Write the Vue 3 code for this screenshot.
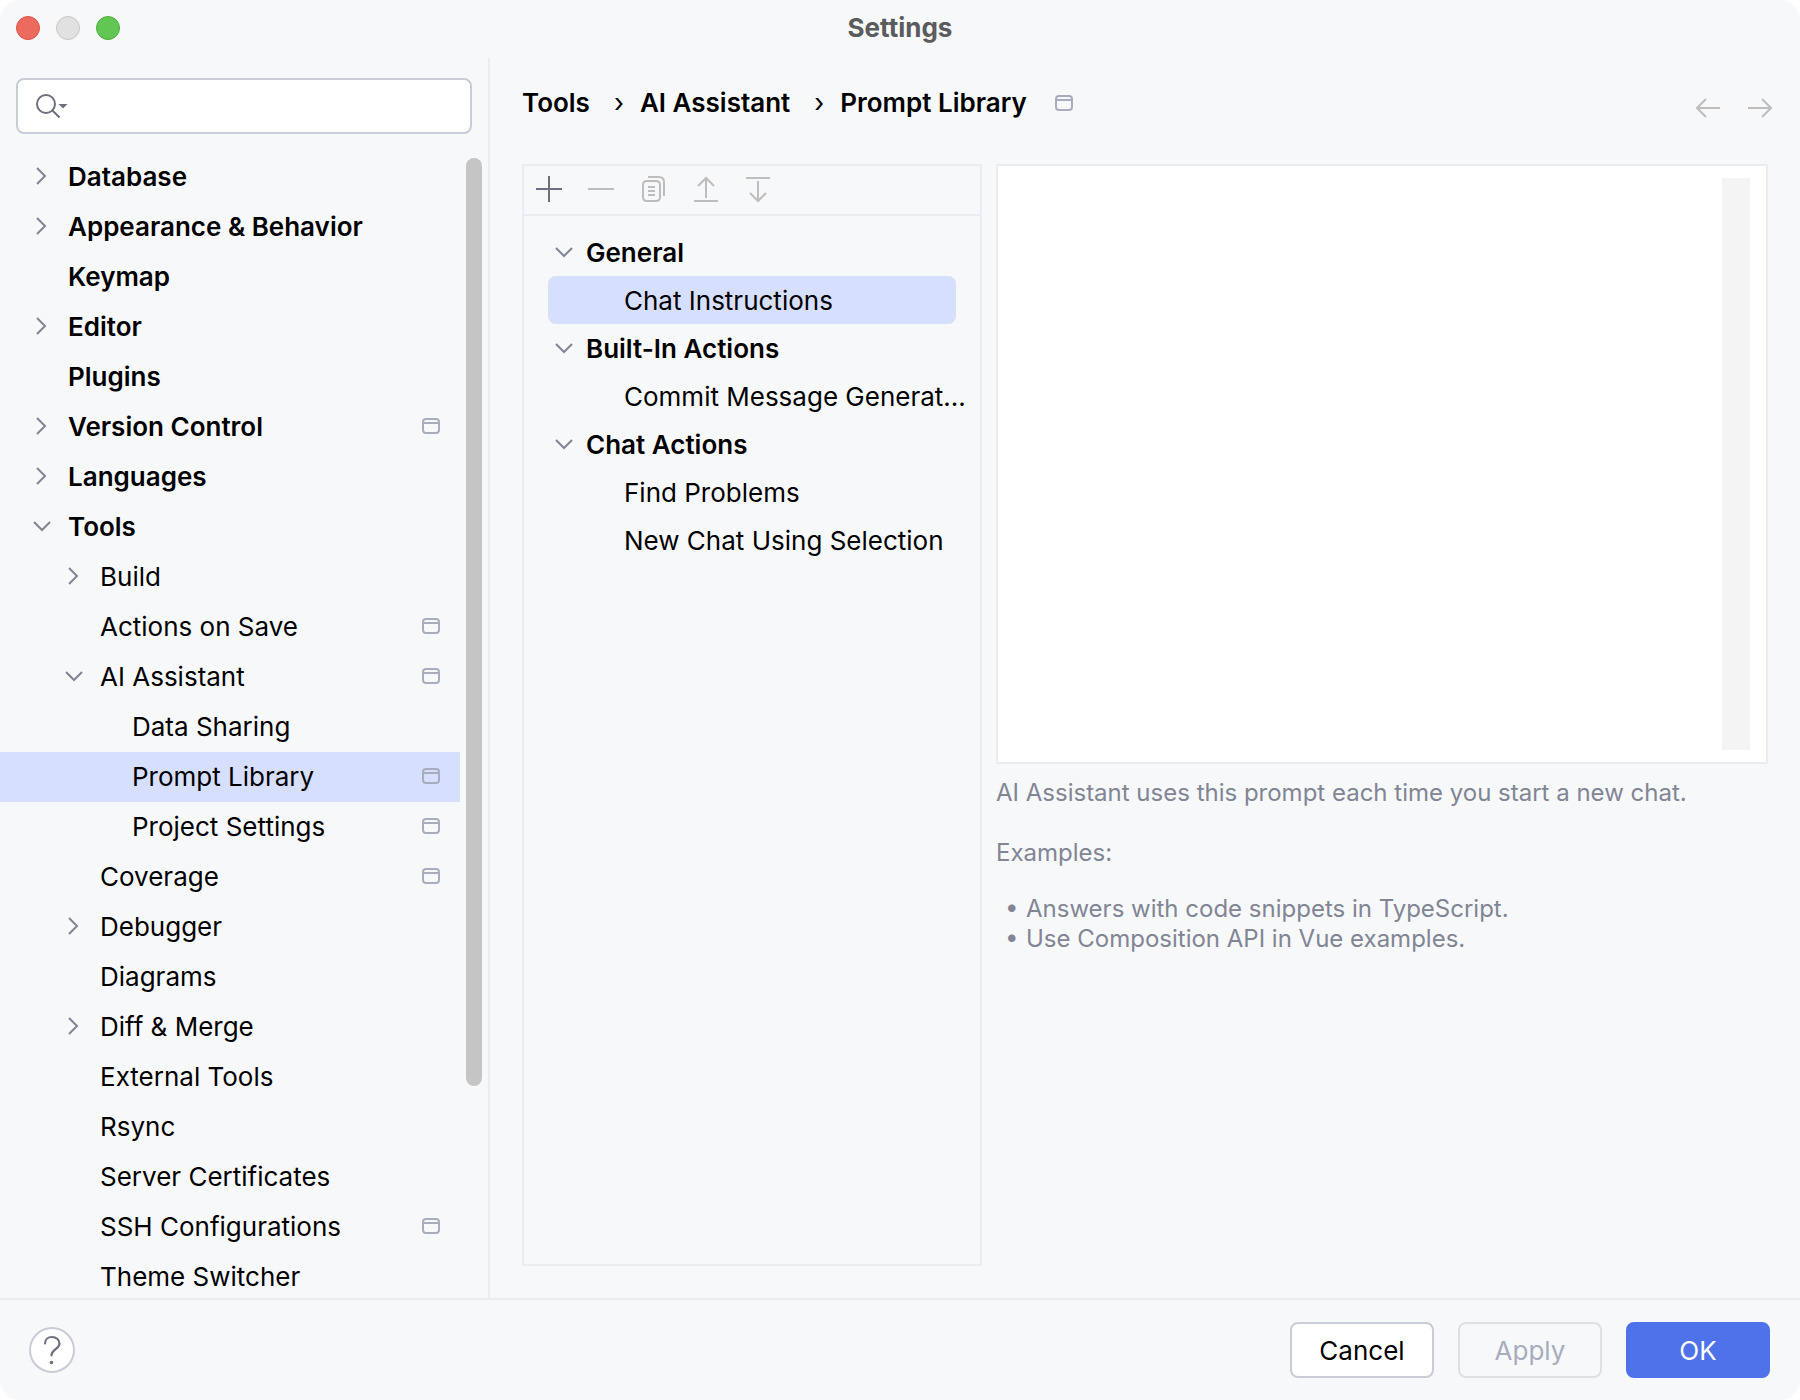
<template>
    <div class="window">
        <header class="titlebar">
            <div class="lights">
                <button type="button" class="light red" aria-label="Close"></button>
                <button type="button" class="light grey" aria-label="Minimize" disabled></button>
                <button type="button" class="light green" aria-label="Zoom"></button>
            </div>
            <h1>Settings</h1>
        </header>

        <div class="body">
            <aside class="sidebar">
                <label class="search">
                    <svg width="36" height="28" viewBox="0 0 36 28" fill="none" aria-hidden="true">
                        <circle cx="12" cy="12" r="9" stroke="#6c707e" stroke-width="2" />
                        <path d="M18.5 18.5L25.5 25.5" stroke="#6c707e" stroke-width="2" />
                        <path d="M24.5 12H33.5L29 16.5Z" fill="#6c707e" />
                    </svg>
                    <input v-model="query" type="text" aria-label="Search settings" />
                </label>

                <div class="scroll_area">
                    <nav class="tree">
                        <a
                            v-for="item in pages"
                            :key="item.name"
                            href="#"
                            class="tree_row"
                            :class="['level' + item.level, { selected: item.name === page }]"
                            @click.prevent="page = item.name"
                        >
                            <svg class="arrow" width="32" height="32" viewBox="0 0 32 32" aria-hidden="true">
                                <path v-if="item.arrow" :d="arrows[item.arrow]" />
                            </svg>
                            <span class="tree_name">{{ item.name }}</span>
                            <svg v-if="item.project" class="badge" width="18" height="18" viewBox="0 0 18 18" aria-hidden="true">
                                <rect x="1" y="1" width="16" height="14" rx="3" />
                                <path d="M1 5H17" />
                            </svg>
                        </a>
                    </nav>
                    <div class="scrollbar"></div>
                </div>
            </aside>

            <main class="content">
                <div class="top">
                    <nav class="crumbs">
                        <a href="#">Tools</a>
                        <span class="sep">›</span>
                        <a href="#">AI Assistant</a>
                        <span class="sep">›</span>
                        <a href="#">Prompt Library</a>
                        <svg class="badge" width="18" height="16" viewBox="0 0 18 16" aria-hidden="true">
                            <rect x="1" y="1" width="16" height="14" rx="3" />
                            <path d="M1 5H17" />
                        </svg>
                    </nav>
                    <div class="history">
                        <button type="button" aria-label="Back" disabled>
                            <svg width="24" height="20" viewBox="0 0 24 20"><path d="M24 10H1M10 1L1 10L10 19" /></svg>
                        </button>
                        <button type="button" aria-label="Forward" disabled>
                            <svg width="24" height="20" viewBox="0 0 24 20"><path d="M0 10H23M14 1L23 10L14 19" /></svg>
                        </button>
                    </div>
                </div>

                <div class="columns">
                    <section class="prompts">
                        <div class="toolbar">
                            <button v-for="tool in tools" :key="tool.label" type="button" :aria-label="tool.label" :disabled="!tool.enabled">
                                <svg width="28" height="28" viewBox="0 0 28 28"><path :d="tool.path" /></svg>
                            </button>
                        </div>
                        <div class="groups">
                            <template v-for="group in groups" :key="group.name">
                                <button type="button" class="prompt_row group">
                                    <svg class="arrow" width="32" height="32" viewBox="0 0 32 32" aria-hidden="true">
                                        <path :d="arrows.down" />
                                    </svg>
                                    {{ group.name }}
                                </button>
                                <button
                                    v-for="name in group.prompts"
                                    :key="name"
                                    type="button"
                                    class="prompt_row prompt"
                                    :class="{ selected: name === prompt }"
                                    @click="prompt = name"
                                >{{ name }}</button>
                            </template>
                        </div>
                    </section>

                    <section class="details">
                        <div class="editor">
                            <textarea v-model="text" aria-label="Prompt text"></textarea>
                            <div class="track"></div>
                        </div>
                        <div class="hint">
                            <p>AI Assistant uses this prompt each time you start a new chat.</p>
                            <p>Examples:</p>
                            <ul>
                                <li>Answers with code snippets in TypeScript.</li>
                                <li>Use Composition API in Vue examples.</li>
                            </ul>
                        </div>
                    </section>
                </div>
            </main>
        </div>

        <footer class="footer">
            <button type="button" class="help" aria-label="Help">
                <svg width="20" height="30" viewBox="0 0 20 30" aria-hidden="true">
                    <path d="M3 8.5C3 4.5 6 2 10 2C14 2 17.5 4.5 17.5 8.5C17.5 14 9.5 14.5 9.5 20.5" fill="none" stroke="#6c707e" stroke-width="2.2" stroke-linecap="round" />
                    <circle cx="9.5" cy="27.5" r="1.8" fill="#6c707e" />
                </svg>
            </button>
            <div class="actions">
                <button type="button" class="btn">Cancel</button>
                <button type="button" class="btn" disabled>Apply</button>
                <button type="button" class="btn primary">OK</button>
            </div>
        </footer>
    </div>
</template>

<script setup>
    import { ref } from "vue";

    const query = ref("");
    const text = ref("");
    const page = ref("Prompt Library");
    const prompt = ref("Chat Instructions");

    const arrows = {
        right: "M11 7L19 15L11 23",
        down: "M8 11L16 19L24 11",
    };

    const pages = [
        { name: "Database", level: 0, arrow: "right" },
        { name: "Appearance & Behavior", level: 0, arrow: "right" },
        { name: "Keymap", level: 0 },
        { name: "Editor", level: 0, arrow: "right" },
        { name: "Plugins", level: 0 },
        { name: "Version Control", level: 0, arrow: "right", project: true },
        { name: "Languages", level: 0, arrow: "right" },
        { name: "Tools", level: 0, arrow: "down" },
        { name: "Build", level: 1, arrow: "right" },
        { name: "Actions on Save", level: 1, project: true },
        { name: "AI Assistant", level: 1, arrow: "down", project: true },
        { name: "Data Sharing", level: 2 },
        { name: "Prompt Library", level: 2, project: true },
        { name: "Project Settings", level: 2, project: true },
        { name: "Coverage", level: 1, project: true },
        { name: "Debugger", level: 1, arrow: "right" },
        { name: "Diagrams", level: 1 },
        { name: "Diff & Merge", level: 1, arrow: "right" },
        { name: "External Tools", level: 1 },
        { name: "Rsync", level: 1 },
        { name: "Server Certificates", level: 1 },
        { name: "SSH Configurations", level: 1, project: true },
        { name: "Theme Switcher", level: 1 },
    ];

    const tools = [
        { label: "Add", enabled: true, path: "M14 1V27M1 14H27" },
        { label: "Remove", path: "M1 14H27" },
        { label: "Copy", path: "M8 6H17Q21 6 21 10V22Q21 26 17 26H8Q4 26 4 22V10Q4 6 8 6ZM9 12H16M9 16H16M9 20H16M9 2H20Q25 2 25 7V21" },
        { label: "Export", path: "M15 23V3M7 11L15 3L23 11M3 26H27" },
        { label: "Import", path: "M3 3H27M15 6V26M7 18L15 26L23 18" },
    ];

    const groups = [
        { name: "General", prompts: ["Chat Instructions"] },
        { name: "Built-In Actions", prompts: ["Commit Message Generat..."] },
        { name: "Chat Actions", prompts: ["Find Problems", "New Chat Using Selection"] },
    ];
</script>

<style>
    body {
        margin: 0;
        background: #fff;
    }
</style>

<style scoped>
    .window {
        display: flex;
        flex-direction: column;
        height: 100vh;
        box-sizing: border-box;
        border-radius: 20px;
        overflow: hidden;
        background: #f7f8fa;
        color: #000;
        font-family: Inter, "Liberation Sans", sans-serif;
        font-size: 26px;
        line-height: 32px;
    }
    button, input, textarea {
        font: inherit;
        color: inherit;
        margin: 0;
        padding: 0;
        border: none;
        background: none;
    }
    a {
        color: inherit;
        text-decoration: none;
    }
    svg {
        flex: none;
        display: block;
    }

    /* title bar */
    .titlebar {
        display: grid;
        grid-template-columns: 1fr auto 1fr;
        align-items: center;
        height: 58px;
        padding: 0 16px 2px;
        box-sizing: border-box;
        flex: none;
    }
    .lights {
        display: flex;
        gap: 16px;
    }
    .light {
        width: 24px;
        height: 24px;
        border-radius: 50%;
        border: 1px solid;
    }
    .red {
        background: #ec6b5e;
        border-color: #d75548;
    }
    .grey {
        background: #e1e1e1;
        border-color: #c6c6c6;
    }
    .green {
        background: #61c654;
        border-color: #4dac3f;
    }
    h1 {
        margin: 0;
        font-size: 26px;
        font-weight: 700;
        color: #5a5b5c;
    }

    .body {
        display: flex;
        flex: 1;
        min-height: 0;
    }

    /* sidebar */
    .sidebar {
        display: flex;
        flex-direction: column;
        flex: none;
        width: 488px;
        border-right: 2px solid #ebecf0;
    }
    .search {
        display: flex;
        align-items: center;
        flex: none;
        gap: 8px;
        height: 56px;
        margin: 20px 16px 0;
        padding: 0 16px;
        box-sizing: border-box;
        border: 2px solid #c9ccd6;
        border-radius: 8px;
        background: #fff;
    }
    .search input {
        flex: 1;
        min-width: 0;
        outline: none;
    }
    .scroll_area {
        display: flex;
        gap: 6px;
        flex: 1;
        min-height: 0;
        padding: 18px 6px 0 0;
        overflow: hidden;
    }
    .tree {
        flex: 1;
        min-width: 0;
    }
    .tree_row {
        display: flex;
        align-items: center;
        height: 50px;
        padding-right: 20px;
    }
    .tree_name {
        flex: 1;
        margin-left: 10px;
    }
    .level0 {
        padding-left: 26px;
        font-weight: 600;
    }
    .level1 {
        padding-left: 58px;
    }
    .level2 {
        padding-left: 90px;
    }
    .selected {
        background: #d6dffd;
    }
    .arrow path {
        fill: none;
        stroke: #818594;
        stroke-width: 2;
    }
    .badge {
        fill: none;
        stroke: #a8adbd;
        stroke-width: 2;
    }
    .scrollbar {
        width: 16px;
        height: 928px;
        margin-top: 6px;
        border-radius: 8px;
        background: #c5c5c6;
    }

    /* page */
    .content {
        display: flex;
        flex-direction: column;
        flex: 1;
        min-width: 0;
        padding: 28px 32px 32px;
    }
    .top {
        display: flex;
        align-items: center;
        justify-content: space-between;
        height: 34px;
    }
    .crumbs {
        display: flex;
        align-items: center;
        font-weight: 600;
    }
    .sep {
        margin: 0 16px 0 24px;
        font-weight: 400;
    }
    .crumbs .badge {
        margin-left: 28px;
    }
    .history {
        display: flex;
        gap: 28px;
        padding: 10px 0 0;
        margin-right: -4px;
    }
    .history path, .toolbar path {
        fill: none;
        stroke: #6c707e;
        stroke-width: 2;
    }
    .history button:disabled path, .toolbar button:disabled path {
        stroke: #bdbdbd;
    }

    .columns {
        display: flex;
        gap: 14px;
        flex: 1;
        min-height: 0;
        margin-top: 44px;
    }
    .prompts {
        flex: none;
        width: 460px;
        box-sizing: border-box;
        border: 2px solid #ebecf0;
    }
    .toolbar {
        display: flex;
        align-items: center;
        gap: 24px;
        height: 46px;
        padding: 0 11px 2px;
        border-bottom: 2px solid #ebecf0;
    }
    .groups {
        padding: 12px 14px 0 24px;
    }
    .prompt_row {
        display: flex;
        align-items: center;
        width: 408px;
        height: 48px;
        padding-top: 2px;
        border-radius: 8px;
        white-space: nowrap;
        text-align: left;
    }
    .group {
        gap: 6px;
        font-weight: 600;
    }
    .prompt {
        padding-left: 76px;
    }

    .details {
        flex: 1;
        min-width: 0;
    }
    .editor {
        display: flex;
        height: 600px;
        box-sizing: border-box;
        padding: 12px 16px 12px 12px;
        border: 2px solid #ebecf0;
        background: #fff;
    }
    .editor textarea {
        flex: 1;
        min-width: 0;
        resize: none;
        outline: none;
    }
    .track {
        width: 28px;
        background: #f4f4f4;
    }
    .hint {
        font-size: 24px;
        line-height: 30px;
        color: #818594;
    }
    .hint p {
        margin: 14px 0 0;
    }
    .hint p + p {
        margin-top: 30px;
    }
    .hint ul {
        margin: 26px 0 0;
        padding: 0 0 0 30px;
        list-style: none;
    }
    .hint li {
        display: flex;
    }
    .hint li::before {
        content: "•";
        width: 21px;
        height: 26px;
        margin-left: -21px;
        line-height: 26px;
    }

    /* bottom bar */
    .footer {
        display: flex;
        align-items: center;
        justify-content: space-between;
        flex: none;
        height: 100px;
        padding: 0 30px 0 29px;
        border-top: 2px solid #ebecf0;
    }
    .help {
        display: flex;
        align-items: center;
        justify-content: center;
        width: 46px;
        height: 46px;
        border: 2px solid #c9ccd6;
        border-radius: 50%;
        background: #fff;
    }
    .actions {
        display: flex;
        gap: 24px;
    }
    .btn {
        width: 144px;
        height: 56px;
        padding-top: 2px;
        border: 2px solid #c9ccd6;
        border-radius: 8px;
        background: #fff;
    }
    .btn:disabled {
        border-color: #dfe0e4;
        background: none;
        color: #a8adbd;
    }
    .primary {
        border-color: #4d72e9;
        background: #4d72e9;
        color: #fff;
    }
</style>
